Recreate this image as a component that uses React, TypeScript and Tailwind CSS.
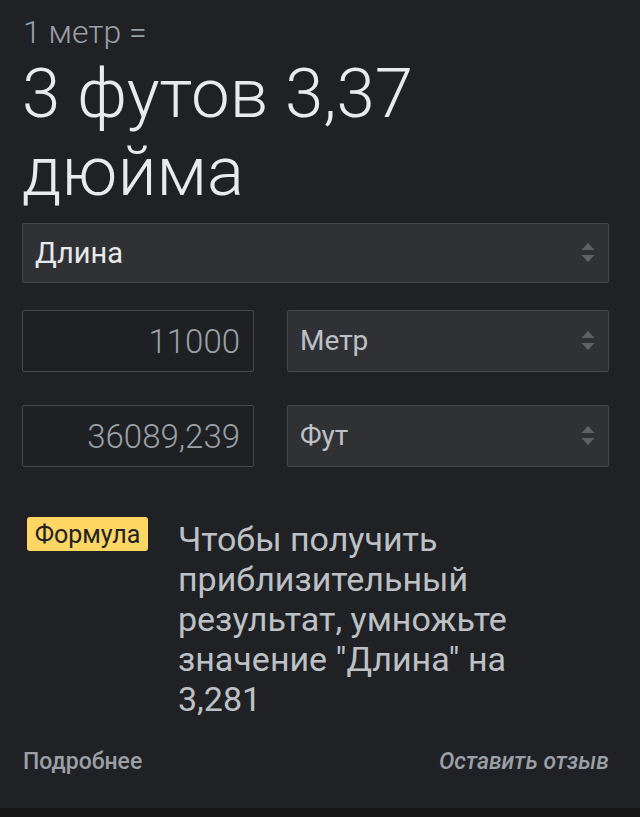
import React from "react";

function Arrows() {
  return (
    <svg width="14" height="20" viewBox="0 0 14 20" className="shrink-0">
      <polygon points="7,0 13.5,7 0.5,7" fill="#5f6164" />
      <polygon points="0.5,12 13.5,12 7,19" fill="#5f6164" />
    </svg>
  );
}

function SelectBox({ label, className, textClass }: { label: string; className?: string; textClass: string }) {
  return (
    <div
      className={
        "flex items-center justify-between bg-[#303134] border border-[#46474a] rounded-[2px] pl-[12px] pr-[13px] " +
        (className ?? "")
      }
    >
      <span className={textClass}>{label}</span>
      <Arrows />
    </div>
  );
}

function NumberBox({ value }: { value: string }) {
  return (
    <div className="w-[232px] h-[62px] flex items-center justify-end bg-[#1f2023] border border-[#46474a] rounded-[2px] pr-[13px]">
      <span className="text-[33px] font-light text-[#9aa0a6] leading-none">{value}</span>
    </div>
  );
}

export default function App() {
  return (
    <div className="w-[640px] h-[817px] bg-[#202124] flex flex-col font-['Roboto',sans-serif]">
      <div className="flex-1 pl-[22px] pr-[31px]">
        <div className="pt-[12px] pl-[1px] text-[32px] leading-[40px] font-light text-[#9aa0a6]">1 метр =</div>
        <div className="mt-[3px] text-[69px] leading-[78px] font-light text-[#e8eaed]">
          3 футов 3,37
          <br />
          дюйма
        </div>

        <SelectBox
          label="Длина"
          className="mt-[12px] h-[60px]"
          textClass="text-[29px] text-[#e8eaed] leading-none"
        />

        <div className="mt-[27px] flex gap-[33px]">
          <NumberBox value="11000" />
          <SelectBox
            label="Метр"
            className="flex-1 h-[62px]"
            textClass="text-[28px] text-[#bdc1c6] leading-none"
          />
        </div>

        <div className="mt-[33px] flex gap-[33px]">
          <NumberBox value="36089,239" />
          <SelectBox
            label="Фут"
            className="flex-1 h-[62px]"
            textClass="text-[28px] text-[#bdc1c6] leading-none"
          />
        </div>

        <div className="mt-[52px] flex items-start">
          <div className="ml-[5px] mt-[-2px] h-[34px] w-[121px] justify-center flex items-center bg-[#fdd663] rounded-[3px] text-[25px] text-[#202124] leading-none">
            Формула
          </div>
          <div className="ml-[30px] w-[390px] text-[34px] leading-[40px] text-[#bdc1c6]">
            Чтобы получить приблизительный результат, умножьте значение "Длина" на 3,281
          </div>
        </div>

        <div className="mt-[28px] flex justify-between items-center text-[23px] leading-[30px] font-medium text-[#9aa0a6]">
          <span className="pl-[1px]">Подробнее</span>
          <span className="italic">Оставить отзыв</span>
        </div>
      </div>
      <div className="h-[9px] bg-[#171717]" />
    </div>
  );
}
